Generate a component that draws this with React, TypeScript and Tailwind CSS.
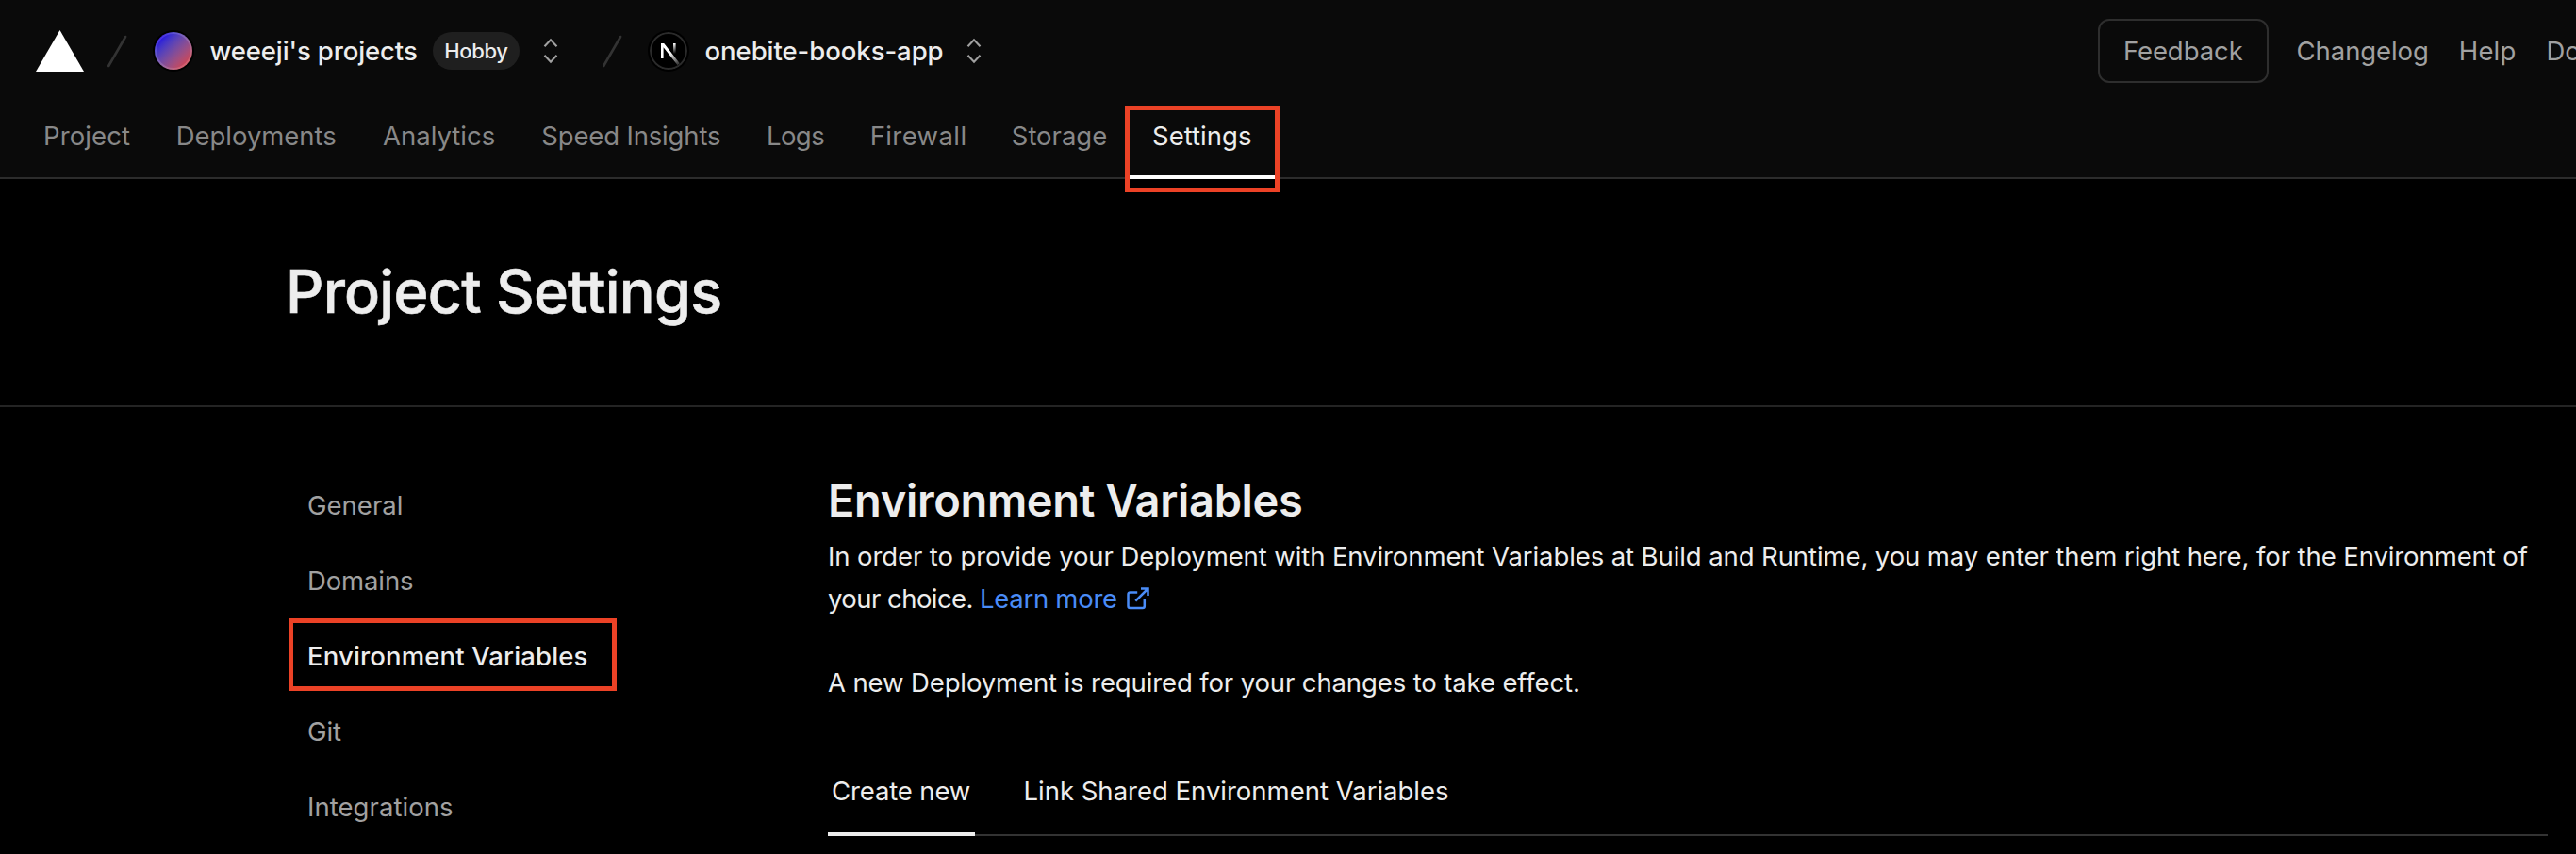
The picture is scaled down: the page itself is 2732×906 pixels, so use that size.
import { clsx } from "clsx";

const navTabs = [
  { label: "Project", box: "w-[140.7px] tracking-[0.108px]" },
  { label: "Deployments", box: "w-[219.3px] tracking-[-0.028px]" },
  { label: "Analytics", box: "w-[168.3px] tracking-[0.002px]" },
  { label: "Speed Insights", box: "w-[238.6px] tracking-[-0.16px]" },
  { label: "Logs", box: "w-[109.8px] tracking-[-0.535px]" },
  { label: "Firewall", box: "w-[150.1px] tracking-[0.4px]" },
  { label: "Storage", box: "w-[149.2px] tracking-[-0.02px]" },
  { label: "Settings", box: "w-[154px] tracking-[0.033px]", active: true },
];

const sideItems = [
  { label: "General", tracking: "tracking-[0.02px]" },
  { label: "Domains", tracking: "tracking-[-0.129px]" },
  { label: "Environment Variables", tracking: "tracking-[0.137px]", active: true },
  { label: "Git", tracking: "tracking-[-0.089px]" },
  { label: "Integrations", tracking: "tracking-[0.05px]" },
];

function Slash({ className }: { className?: string }) {
  return (
    <svg className={clsx("shrink-0", className)} width="22" height="36" viewBox="0 0 22 36" fill="none">
      <path d="M20.1 3 L2.2 34" stroke="#333333" strokeWidth="2.6" strokeLinecap="round" />
    </svg>
  );
}

function ChevronsUpDown({ className }: { className?: string }) {
  return (
    <svg className={clsx("shrink-0", className)} width="16" height="28" viewBox="0 0 16 28" fill="none">
      <path d="M1.5 9.2 L8 2.2 L14.5 9.2 M1.5 18.8 L8 25.8 L14.5 18.8" stroke="#a1a1a1" strokeWidth="2.1" />
    </svg>
  );
}

function NextLogo({ className }: { className?: string }) {
  return (
    <svg
      className={clsx("shrink-0 rounded-full shadow-[0_0_0_2px_#000]", className)}
      width="40"
      height="40"
      viewBox="0 0 40 40"
      fill="none"
    >
      <defs>
        <linearGradient id="diagonal" x1="22" y1="22" x2="30" y2="33" gradientUnits="userSpaceOnUse">
          <stop stopColor="#fff" />
          <stop offset="1" stopColor="#fff" stopOpacity="0.25" />
        </linearGradient>
        <linearGradient id="stem" x1="26" y1="12" x2="26" y2="23" gradientUnits="userSpaceOnUse">
          <stop stopColor="#fff" />
          <stop offset="1" stopColor="#fff" stopOpacity="0" />
        </linearGradient>
      </defs>
      <circle cx="20" cy="20" r="20" fill="#000" />
      <path d="M12 12 H15.2 L31.8 33.2 L29.4 35 L14.6 16.2 V28 H12 Z" fill="url(#diagonal)" />
      <rect x="25" y="12" width="2.6" height="12" fill="url(#stem)" />
      <circle cx="20" cy="20" r="19" stroke="#2b2b2b" strokeWidth="2" />
    </svg>
  );
}

function ExternalIcon({ className }: { className?: string }) {
  return (
    <svg className={className} width="28" height="28" viewBox="0 0 28 28" fill="none" stroke="#4a8cf7" strokeWidth="2.5">
      <path d="M13.2 7.4 H5.5 a2 2 0 0 0 -2 2 V22.1 a2 2 0 0 0 2 2 H18.8 a2 2 0 0 0 2 -2 V14.3" />
      <path d="M17 3.5 H24.5 V11 M24.5 3.5 L11.3 16.7" />
    </svg>
  );
}

function Header() {
  return (
    <header className="h-[190px] border-b-2 border-[#2c2c2c] bg-[#0a0a0a]">
      <div className="flex h-[108px] items-center pl-[38px] font-medium text-[#ededed]">
        <svg className="shrink-0" width="51" height="44" viewBox="0 0 51 44">
          <path d="M25.5 0 L51 44 H0 Z" fill="#fff" />
        </svg>
        <Slash className="ml-6" />
        <span className="ml-[29px] size-10 shrink-0 rounded-full border-2 border-white/15 bg-linear-135 from-[#2600e0] from-15% to-[#e8342c] to-95% bg-origin-border shadow-[0_0_0_2px_#000]" />
        <span className="ml-[18.5px] w-[220.5px] shrink-0 tracking-[-0.11px]">weeeji's projects</span>
        <span className="ml-4 flex h-10 w-[92px] shrink-0 items-center justify-center rounded-full bg-[#1f1f1f] text-[22px] tracking-[-0.363px]">
          Hobby
        </span>
        <ChevronsUpDown className="ml-[25px]" />
        <Slash className="ml-[46px]" />
        <NextLogo className="ml-[29px]" />
        <span className="ml-[18.5px] w-[252.5px] shrink-0 tracking-[-0.052px]">onebite-books-app</span>
        <ChevronsUpDown className="ml-[24.6px]" />
        <div className="ml-auto flex w-[507px] shrink-0 items-center overflow-hidden font-normal text-[#a1a1a1]">
          <button className="mr-[30px] h-[68px] w-[180.6px] shrink-0 rounded-xl border-2 border-[#2e2e2e] tracking-[-0.073px]">
            Feedback
          </button>
          <div className="flex gap-8">
            <span className="tracking-[-0.086px]">Changelog</span>
            <span className="tracking-[0.157px]">Help</span>
            <span>Docs</span>
          </div>
        </div>
      </div>
      <nav className="flex h-[82px] pl-[22px]">
        {navTabs.map((tab) => (
          <div
            key={tab.label}
            className={clsx(
              "relative flex h-[82px] shrink-0 items-center pb-[10px] pl-6",
              tab.box,
              tab.active ? "text-[#ededed]" : "text-[#888888]",
            )}
          >
            {tab.label}
            {tab.active && (
              <>
                <span className="absolute inset-x-0 bottom-0 h-1 bg-white" />
                <span className="absolute top-1 -left-[5px] h-[92px] w-[164px] border-5 border-[#ec4226]" />
              </>
            )}
          </div>
        ))}
      </nav>
    </header>
  );
}

export default function App() {
  return (
    <div className="h-[906px] w-[2732px] overflow-hidden bg-black font-['Inter','Liberation_Sans',sans-serif] text-[27.5px] leading-[44.8px] whitespace-nowrap text-[#ededed]">
      <Header />
      <section className="flex h-[242px] items-center border-b-2 border-[#242424] pb-[2px] pl-[303px]">
        <h1 className="text-[63px] leading-none font-medium tracking-[-0.77px] [-webkit-text-stroke:0.6px_#ededed]">
          Project Settings
        </h1>
      </section>
      <div className="flex pl-[302px]">
        <aside className="w-[576px] shrink-0 pt-16">
          {sideItems.map((item) => (
            <div
              key={item.label}
              className={clsx(
                "relative flex h-20 items-center pl-6",
                item.tracking,
                item.active ? "font-medium" : "text-[#a1a1a1]",
              )}
            >
              {item.label}
              {item.active && <span className="absolute top-0 left-1 h-[77px] w-[348px] border-5 border-[#ec4226]" />}
            </div>
          ))}
        </aside>
        <main className="w-[1824px] shrink-0 pt-[70px]">
          <h2 className="text-[47px] leading-[58px] font-semibold tracking-[-0.348px]">Environment Variables</h2>
          <div className="mt-[7.6px]">
            <p className="tracking-[-0.096px]">
              In order to provide your Deployment with Environment Variables at Build and Runtime, you may enter them
              right here, for the Environment of
            </p>
            <p className="flex h-[44.8px] items-center">
              <span className="w-[161px] pt-px tracking-[-0.55px]">your choice.</span>
              <a className="flex items-center text-[#4a8cf7]">
                <span className="w-[154px] pt-px tracking-[-0.281px]">Learn more</span>
                <ExternalIcon />
              </a>
            </p>
            <p className="mt-[44.8px] tracking-[-0.121px]">
              A new Deployment is required for your changes to take effect.
            </p>
          </div>
          <div className="mt-[46.2px] flex h-[94px] gap-[51.5px] border-b-2 border-[#333333]">
            <div className="relative flex w-[156px] items-center pl-1 tracking-[-0.134px]">
              Create new
              <span className="absolute inset-x-0 -bottom-[2px] h-1 bg-[#ededed]" />
            </div>
            <div className="flex items-center tracking-[-0.009px]">Link Shared Environment Variables</div>
          </div>
        </main>
      </div>
    </div>
  );
}
